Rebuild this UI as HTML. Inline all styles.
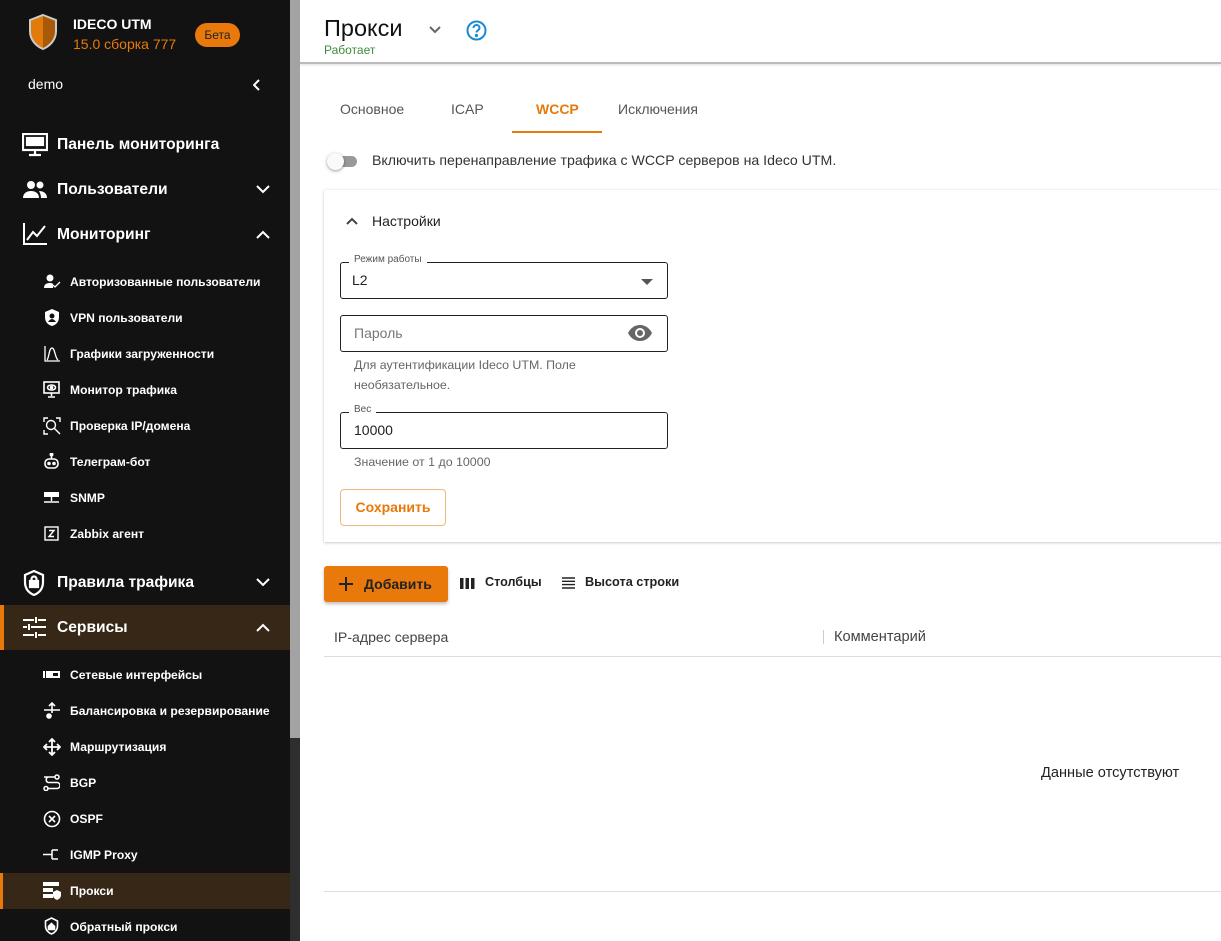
<!DOCTYPE html>
<html><head><meta charset="utf-8"><style>
*{box-sizing:border-box;margin:0;padding:0}
body{width:1221px;height:941px;overflow:hidden;font-family:"Liberation Sans",sans-serif;background:#fff;position:relative}
.sb{position:absolute;left:0;top:0;width:290px;height:941px;background:#121212;color:#fff}
.track{position:absolute;left:290px;top:0;width:10px;height:941px;background:#2e2e2e}
.thumb{position:absolute;left:290px;top:0;width:10px;height:738px;background:#a3a3a3}
.a{position:absolute;white-space:nowrap}
.top{font-size:15.6px;font-weight:bold;left:57px}
.sub{font-size:12.1px;font-weight:bold;left:70px}
.ic{position:absolute}
.fld{position:absolute;left:340px;width:328px;border:1.3px solid #222;border-radius:3px;height:37px}
.lbl{position:absolute;background:#fff;padding:0 5px;font-size:10px;color:#555}
.help{position:absolute;font-size:12.4px;color:#666;left:354px;line-height:20px}
</style></head><body>
<div class="sb">
  <svg class="ic" style="left:27px;top:13px" width="32" height="38" viewBox="0 0 32 38"><path d="M16 2 L29 7 V18 C29 27 23 33 16 36 C9 33 3 27 3 18 V7 Z" fill="#e27b0c" stroke="#ccc" stroke-width="2"/><path d="M16 3 L28 8 V18 C28 26 22 32 16 35 Z" fill="#a85a08"/></svg>
  <div class="a" style="left:73px;top:16px;font-size:14px;font-weight:bold">IDECO UTM</div>
  <div class="a" style="left:73px;top:36px;font-size:14px;color:#e8790a">15.0 сборка 777</div>
  <div class="a" style="left:195px;top:23px;width:45px;height:24px;border-radius:12px;background:#e8790a;color:#222;font-size:12px;text-align:center;line-height:24px">Бета</div>
  <div class="a" style="left:28px;top:76px;font-size:14px">demo</div>
  <svg class="ic" style="left:253px;top:79px" width="8" height="12" viewBox="0 0 8 12" fill="none" stroke="#fff" stroke-width="2"><path d="M6 1L1 6l5 5"/></svg>

  <svg class="ic" style="left:22px;top:133px" width="26" height="24" viewBox="0 0 26 24" fill="none" stroke="#fff" stroke-width="2.2"><rect x="1" y="1" width="24" height="16"/><path d="M13 17v4M7 22h12"/><rect x="5" y="5" width="9" height="3" fill="#fff"/><rect x="16" y="5" width="5" height="7" fill="#fff"/><rect x="5" y="10" width="9" height="2" fill="#fff"/></svg>
  <div class="a top" style="top:136px">Панель мониторинга</div>
  <svg class="ic" style="left:22px;top:180px" width="26" height="18" viewBox="0 0 26 18" fill="#fff"><circle cx="9" cy="5" r="4"/><circle cx="18" cy="5" r="3.5"/><path d="M1 18c0-5 4-7 8-7s8 2 8 7z"/><path d="M17 11c4 0 8 2 8 7h-6c0-3-1-5-2-7z"/></svg>
  <div class="a top" style="top:181px">Пользователи</div>
  <svg class="ic" style="left:22px;top:222px" width="26" height="24" viewBox="0 0 26 24" fill="none" stroke="#fff" stroke-width="2"><path d="M2 1v21h23"/><path d="M5 18l6-8 4 4 8-10"/></svg>
  <div class="a top" style="top:226px">Мониторинг</div>
  <svg class="ic" style="left:256px;top:230px" width="14" height="9" viewBox="0 0 14 9" fill="none" stroke="#fff" stroke-width="2"><path d="M1 8l6-6 6 6"/></svg>
  <svg class="ic" style="left:256px;top:185px" width="14" height="9" viewBox="0 0 14 9" fill="none" stroke="#fff" stroke-width="2"><path d="M1 1l6 6 6-6"/></svg>

  <svg class="ic" style="left:44px;top:274px" width="17" height="15" viewBox="0 0 17 15" fill="#fff"><circle cx="6" cy="4" r="3.5"/><path d="M0 14c0-4 3-5 6-5 1 0 2 0 3 1v4z"/><path d="M9 11l2 2 5-5" stroke="#fff" fill="none" stroke-width="1.3"/></svg>
  <div class="a sub" style="top:275px">Авторизованные пользователи</div>
  <svg class="ic" style="left:45px;top:309px" width="14" height="17" viewBox="0 0 14 17" fill="#fff"><path d="M7 0l7 3v5c0 5-3 8-7 9-4-1-7-4-7-9V3z"/><circle cx="7" cy="7" r="2.5" fill="#121212"/><path d="M3 13c1-2 3-3 4-3s3 1 4 3" fill="#121212"/></svg>
  <div class="a sub" style="top:311px">VPN пользователи</div>
  <svg class="ic" style="left:44px;top:345px" width="16" height="17" viewBox="0 0 16 17" fill="none" stroke="#fff" stroke-width="1.3"><path d="M1 1v15h15"/><path d="M3 15c2-2 2-12 5-12s3 10 6 12"/></svg>
  <div class="a sub" style="top:347px">Графики загруженности</div>
  <svg class="ic" style="left:43px;top:381px" width="17" height="17" viewBox="0 0 17 17" fill="none" stroke="#fff" stroke-width="1.6"><rect x="1" y="1" width="15" height="11"/><path d="M8.5 12v3M5 16h7"/><ellipse cx="8.5" cy="6.5" rx="4" ry="2.5"/><circle cx="8.5" cy="6.5" r="1" fill="#fff"/></svg>
  <div class="a sub" style="top:383px">Монитор трафика</div>
  <svg class="ic" style="left:43px;top:417px" width="18" height="18" viewBox="0 0 18 18" fill="none" stroke="#fff" stroke-width="1.4"><path d="M1 5V1h4M13 1h4v4M1 13v4h4"/><circle cx="8" cy="8" r="4.5"/><path d="M11 11l6 6"/></svg>
  <div class="a sub" style="top:419px">Проверка IP/домена</div>
  <svg class="ic" style="left:43px;top:453px" width="17" height="17" viewBox="0 0 17 17" fill="none" stroke="#fff" stroke-width="1.6"><circle cx="8.5" cy="1.5" r="1.2" fill="#fff"/><path d="M8.5 3v3"/><rect x="2" y="6" width="13" height="9" rx="4"/><circle cx="6" cy="10.5" r="1" fill="#fff"/><circle cx="11" cy="10.5" r="1" fill="#fff"/></svg>
  <div class="a sub" style="top:455px">Телеграм-бот</div>
  <svg class="ic" style="left:43px;top:491px" width="17" height="14" viewBox="0 0 17 14" fill="#fff"><rect x="1" y="1" width="15" height="5"/><path d="M8.5 6v4M1 11h15" stroke="#fff" stroke-width="1.5"/></svg>
  <div class="a sub" style="top:491px">SNMP</div>
  <svg class="ic" style="left:44px;top:526px" width="15" height="15" viewBox="0 0 15 15" fill="none" stroke="#fff" stroke-width="1.4"><rect x="1" y="1" width="13" height="13"/><path d="M5 4.5h5l-5 6h5"/></svg>
  <div class="a sub" style="top:527px">Zabbix агент</div>

  <svg class="ic" style="left:23px;top:570px" width="22" height="26" viewBox="0 0 22 26" fill="none" stroke="#fff" stroke-width="2.2"><path d="M11 1l9 4v7c0 7-4 11-9 13-5-2-9-6-9-13V5z"/><rect x="7" y="11" width="8" height="6" fill="#fff"/><path d="M8.5 11V9a2.5 2.5 0 015 0v2"/></svg>
  <div class="a top" style="top:574px">Правила трафика</div>
  <svg class="ic" style="left:256px;top:578px" width="14" height="9" viewBox="0 0 14 9" fill="none" stroke="#fff" stroke-width="2"><path d="M1 1l6 6 6-6"/></svg>

  <div class="a" style="left:0;top:605px;width:290px;height:45px;background:#372717;border-left:4px solid #e8790a"></div>
  <svg class="ic" style="left:23px;top:617px" width="23" height="21" viewBox="0 0 23 21" stroke="#fff" stroke-width="2"><path d="M0 3h11M15 3h8M13 0v6M0 10h4M8 10h15M6 7v6M0 18h11M15 18h8M13 15v6"/></svg>
  <div class="a top" style="top:619px">Сервисы</div>
  <svg class="ic" style="left:256px;top:623px" width="14" height="9" viewBox="0 0 14 9" fill="none" stroke="#fff" stroke-width="2"><path d="M1 8l6-6 6 6"/></svg>

  <svg class="ic" style="left:43px;top:670px" width="17" height="9" viewBox="0 0 17 9" fill="#fff"><rect x="0" y="1" width="2" height="7"/><rect x="3" y="1" width="14" height="7"/><rect x="10" y="3" width="5" height="3" fill="#121212"/></svg>
  <div class="a sub" style="top:668px">Сетевые интерфейсы</div>
  <svg class="ic" style="left:43px;top:702px" width="18" height="17" viewBox="0 0 18 17" fill="none" stroke="#fff" stroke-width="1.6"><path d="M9 1v10M1 8h16M6 4l3-3 3 3"/><circle cx="6" cy="14" r="2" fill="#fff"/></svg>
  <div class="a sub" style="top:704px">Балансировка и резервирование</div>
  <svg class="ic" style="left:43px;top:738px" width="18" height="18" viewBox="0 0 18 18" fill="none" stroke="#fff" stroke-width="1.8"><path d="M9 1v16M1 9h16M6 4l3-3 3 3M6 14l3 3 3-3M4 6l-3 3 3 3M14 6l3 3-3 3"/></svg>
  <div class="a sub" style="top:740px">Маршрутизация</div>
  <svg class="ic" style="left:43px;top:774px" width="17" height="17" viewBox="0 0 17 17" fill="none" stroke="#fff" stroke-width="1.5"><path d="M1 3h11M5 8.5h9a3 3 0 010 6H4M5 8.5a3 3 0 010-5.5"/><circle cx="14" cy="3" r="2"/><circle cx="3" cy="14.5" r="2"/></svg>
  <div class="a sub" style="top:776px">BGP</div>
  <svg class="ic" style="left:43px;top:810px" width="18" height="18" viewBox="0 0 18 18" fill="none" stroke="#fff" stroke-width="1.6"><circle cx="9" cy="9" r="7.5"/><path d="M6 6l6 6M12 6l-6 6"/></svg>
  <div class="a sub" style="top:812px">OSPF</div>
  <svg class="ic" style="left:43px;top:847px" width="15" height="15" viewBox="0 0 15 15" fill="none" stroke="#fff" stroke-width="1.5"><path d="M0 7.5h9M9 3h6M9 12h6M9 3v9"/></svg>
  <div class="a sub" style="top:848px">IGMP Proxy</div>

  <div class="a" style="left:0;top:873px;width:291px;height:36px;background:#372717;border-left:3px solid #e8790a"></div>
  <svg class="ic" style="left:43px;top:882px" width="18" height="18" viewBox="0 0 18 18" fill="#fff"><rect x="0" y="0" width="16" height="4"/><rect x="0" y="6" width="10" height="4"/><rect x="0" y="12" width="10" height="4"/><path d="M14 8l4 2v3c0 3-2 4-4 5-2-1-4-2-4-5v-3z"/></svg>
  <div class="a sub" style="top:884px">Прокси</div>
  <svg class="ic" style="left:44px;top:917px" width="15" height="18" viewBox="0 0 15 18" fill="none" stroke="#fff" stroke-width="1.6"><path d="M7.5 1l6 3v5c0 4-3 7-6 8-3-1-6-4-6-8V4z"/><path d="M4.5 9.5l3-3 3 3v3h-6z" fill="#fff"/></svg>
  <div class="a sub" style="top:920px">Обратный прокси</div>
</div>
<div class="track"></div><div class="thumb"></div>

<div class="a" style="left:324px;top:15px;font-size:23.5px;color:#111">Прокси</div>
<svg class="ic" style="left:429px;top:26px" width="12" height="8" viewBox="0 0 12 8" fill="none" stroke="#666" stroke-width="2"><path d="M1 1l5 5 5-5"/></svg>
<svg class="ic" style="left:466px;top:20px" width="21" height="21" viewBox="0 0 21 21" fill="none" stroke="#1a8ad6" stroke-width="2"><circle cx="10.5" cy="10.5" r="9"/><path d="M7.5 8a3 3 0 116 0c0 2-3 2.5-3 4.5"/><circle cx="10.5" cy="15.5" r=".6" fill="#1a8ad6"/></svg>
<div class="a" style="left:324px;top:43px;font-size:12px;color:#3c8c3c">Работает</div>
<div class="a" style="left:300px;top:62px;width:921px;height:2px;background:#bbb;box-shadow:0 1px 2px rgba(0,0,0,.15)"></div>

<div class="a" style="left:340px;top:101px;font-size:14px;color:#555">Основное</div>
<div class="a" style="left:451px;top:101px;font-size:14px;color:#555">ICAP</div>
<div class="a" style="left:536px;top:101px;font-size:14px;color:#e8790a;font-weight:bold">WCCP</div>
<div class="a" style="left:618px;top:101px;font-size:14px;color:#555">Исключения</div>
<div class="a" style="left:512px;top:131px;width:90px;height:2px;background:#e8790a"></div>

<div class="a" style="left:330px;top:156px;width:27px;height:11px;border-radius:6px;background:#999"></div>
<div class="a" style="left:327px;top:153px;width:17px;height:17px;border-radius:50%;background:#fafafa;box-shadow:0 1px 3px rgba(0,0,0,.4)"></div>
<div class="a" style="left:372px;top:152px;font-size:14.15px;color:#333">Включить перенаправление трафика с WCCP серверов на Ideco UTM.</div>

<div class="a" style="left:324px;top:190px;width:900px;height:352px;background:#fff;box-shadow:0 1px 3px rgba(0,0,0,.18),0 0 1px rgba(0,0,0,.12)"></div>
<svg class="ic" style="left:346px;top:217px" width="12" height="8" viewBox="0 0 12 8" fill="none" stroke="#444" stroke-width="2"><path d="M1 7l5-5 5 5"/></svg>
<div class="a" style="left:372px;top:213px;font-size:14px;color:#222">Настройки</div>

<div class="fld" style="top:262px"></div>
<div class="lbl" style="left:349px;top:254px">Режим работы</div>
<div class="a" style="left:352px;top:272px;font-size:14px;color:#222">L2</div>
<svg class="ic" style="left:641px;top:279px" width="12" height="6" viewBox="0 0 12 6"><path d="M0 0h12L6 6z" fill="#555"/></svg>

<div class="fld" style="top:315px;height:37px"></div>
<div class="a" style="left:354px;top:325px;font-size:14px;color:#777">Пароль</div>
<svg class="ic" style="left:628px;top:324px" width="24" height="18" viewBox="0 0 24 18" fill="#666"><path d="M12 1C6 1 2 5 0 9c2 4 6 8 12 8s10-4 12-8c-2-4-6-8-12-8z"/><circle cx="12" cy="9" r="5" fill="#fff"/><circle cx="12" cy="9" r="3" fill="#666"/></svg>
<div class="help" style="top:355px">Для аутентификации Ideco UTM. Поле<br>необязательное.</div>

<div class="fld" style="top:412px"></div>
<div class="lbl" style="left:349px;top:404px">Вес</div>
<div class="a" style="left:354px;top:422px;font-size:14px;color:#222">10000</div>
<div class="help" style="top:452px">Значение от 1 до 10000</div>

<div class="a" style="left:340px;top:489px;width:106px;height:37px;border:1px solid #f2b77a;border-radius:4px;color:#e8790a;font-weight:bold;font-size:14px;text-align:center;line-height:35px">Сохранить</div>

<div class="a" style="left:324px;top:566px;width:124px;height:36px;background:#e8790a;border-radius:3px;box-shadow:0 2px 3px rgba(0,0,0,.25);font-size:14px;font-weight:bold;color:#222;line-height:36px;padding-left:40px">Добавить</div>
<svg class="ic" style="left:339px;top:577px" width="14" height="14" viewBox="0 0 14 14" stroke="#222" stroke-width="2"><path d="M7 0v14M0 7h14"/></svg>
<svg class="ic" style="left:460px;top:578px" width="15" height="11" viewBox="0 0 15 11" fill="#222"><rect x="0" y="0" width="3.5" height="11"/><rect x="5.5" y="0" width="3.5" height="11"/><rect x="11" y="0" width="3.5" height="11"/></svg>
<div class="a" style="left:485px;top:575px;font-size:12.6px;font-weight:bold;color:#222">Столбцы</div>
<svg class="ic" style="left:562px;top:577px" width="13" height="12" viewBox="0 0 13 12" stroke="#222" stroke-width="1.4"><path d="M0 1h13M0 4.3h13M0 7.6h13M0 11h13"/></svg>
<div class="a" style="left:585px;top:575px;font-size:12.7px;font-weight:bold;color:#222">Высота строки</div>

<div class="a" style="left:334px;top:629px;font-size:14.1px;color:#444">IP-адрес сервера</div>
<div class="a" style="left:823px;top:630px;width:1px;height:14px;background:#ccc"></div>
<div class="a" style="left:834px;top:629px;font-size:14.6px;color:#444">Комментарий</div>
<div class="a" style="left:324px;top:656px;width:897px;height:1px;background:#ddd"></div>
<div class="a" style="left:1041px;top:765px;font-size:14.6px;color:#222">Данные отсутствуют</div>
<div class="a" style="left:324px;top:891px;width:897px;height:1px;background:#ddd"></div>
</body></html>
